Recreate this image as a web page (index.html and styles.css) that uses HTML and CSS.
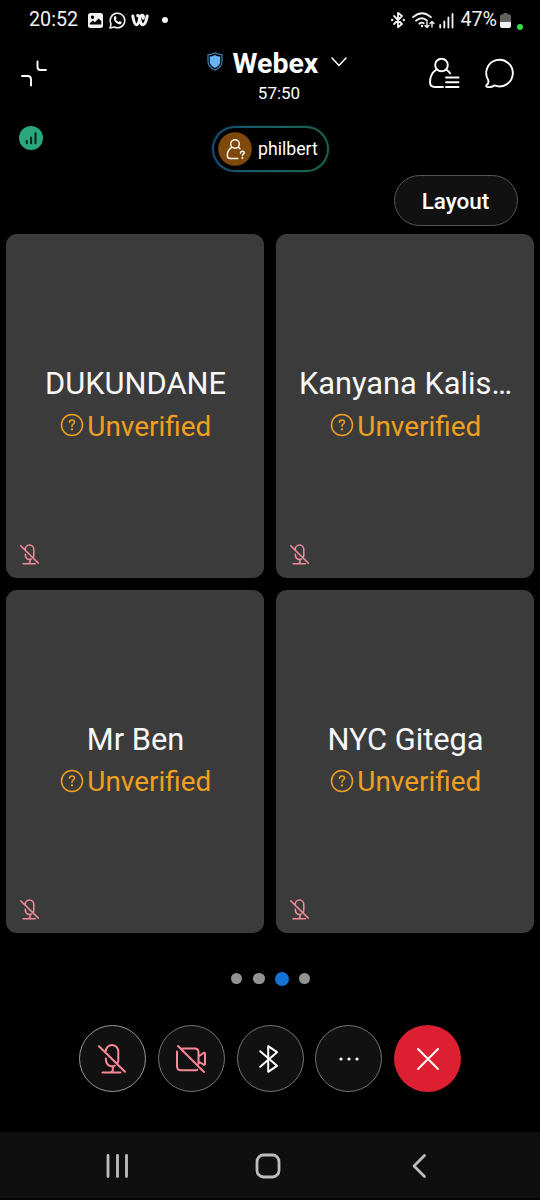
FILE: index.html
```html
<!DOCTYPE html>
<html lang="en">
<head>
<meta charset="utf-8">
<title>Webex meeting</title>
<link rel="stylesheet" href="styles.css">
</head>
<body>
<svg class="symbols" width="0" height="0" aria-hidden="true">
  <symbol id="mic-off" viewBox="0 0 28 30">
    <path d="M7.700 8V7.500a6.300 6.500 0 0 1 12.600 0v9q0 1.200-.6 2.200M7.900 14.500v1.700q.6 5.300 5.300 6.100 1.800.3 3.600-.6M14.800 22.700v2.500q0 3-2.800 3.300M4.500 28.500h18M1 2.200l26 25.500"/>
  </symbol>
  <symbol id="question" viewBox="0 0 24 24">
    <circle cx="12" cy="12" r="10.500"/>
    <path d="M9.500 9.300q.1-2.300 2.500-2.300t2.500 2.100q0 1.300-1.400 2.100-1.100.7-1.100 1.900v.5"/>
    <circle class="solid" cx="12" cy="16.400" r="1.100"/>
  </symbol>
</svg>
<div class="screen">
  <div class="status">
    <div class="status-left">
      <span>20:52</span>
      <svg class="i-photo" viewBox="0 0 15 15"><path fill="#f2f2f2" fill-rule="evenodd" d="M2.500 0h10A2.500 2.500 0 0 1 15 2.500v10a2.500 2.500 0 0 1-2.500 2.500h-10A2.500 2.500 0 0 1 0 12.500v-10A2.500 2.500 0 0 1 2.500 0zM4.500 2.500a1.700 1.700 0 1 0 .01 0zM1.700 11.500h11.600V8L10.500 5.500 7 9.300 4.800 7.600 1.700 10.300z"/></svg>
      <svg class="i-whatsapp" viewBox="0 0 17 17"><path class="line" d="M1 16l1.100-4A7.300 7.300 0 1 1 5.200 15z"/><path fill="#f2f2f2" d="M5.600 4.500c.8-.8 1.400-.2 1.600.6l.4 1.100-.8 1.100q1 1.900 2.900 2.700l1.100-1 1.800.9c.5.4 0 1.600-.8 2-1.600.8-3.500-.1-5-1.500C5 8.700 4 6 5.600 4.500z"/></svg>
      <svg class="i-webex" viewBox="0 0 18 14"><path fill="none" stroke="#f2f2f2" stroke-width="3" stroke-linecap="round" stroke-linejoin="round" d="M1.800 3c.7 4 1.500 8.800 3.800 8.800C8.600 11.800 8 2.200 11 2.200c1.500 0 1.700 1.500 1.300 3M6.600 2.500c1.700 0 2 2.500 2.400 4.500.5 3 1 4.800 2.900 4.800 2.700 0 3.600-5 4.300-8.800"/></svg>
      <i class="more-dot"></i>
    </div>
    <div class="status-right">
      <svg class="i-bt" viewBox="0 0 14 16"><path class="line bold" d="M3 4l8 8-4 3.200V.8L11 4l-8 8"/><circle cx="1.200" cy="8" r="1.200" fill="#f2f2f2"/><circle cx="12.800" cy="8" r="1.200" fill="#f2f2f2"/></svg>
      <svg class="i-wifi" viewBox="0 0 23 17"><path class="line bold" d="M1 5.200q9-8 18 0M4 8.700q6-5 11 0M7.200 11.700q2.500-2 4.500-.5"/><circle cx="10" cy="14" r="1.200" fill="#f2f2f2"/><path class="line thin" d="M15 10v5.500M13 13.500l2 2 2-2M20 15V9.500M18 11.500l2-2 2 2"/></svg>
      <svg class="i-signal" viewBox="0 0 15 15"><path class="line bold" d="M1.200 12v2.500M5.300 8.500v6M9.400 4.500v10M13.500 1v13.500"/></svg>
      <span>47%</span>
      <svg class="i-battery" viewBox="0 0 11 15"><path fill="#626262" d="M3.500 0h4v1.300H9q2 0 2 2V9H0V3.300q0-2 2-2h1.500z"/><path fill="#f2f2f2" d="M0 9h11v4q0 2-2 2H2q-2 0-2-2z"/></svg>
      <i class="camera-dot"></i>
    </div>
  </div>

  <header class="header">
    <svg class="i-collapse" viewBox="21 60 26 27"><path d="M37.500 61.500v5.500q0 3 3 3h5.500M22 76h5.500q3.500 0 3.500 3.500v6"/></svg>
    <div class="meeting">
      <div class="meeting-title">
        <svg class="i-shield" viewBox="0 0 16 19"><path fill="none" stroke="#438dcb" stroke-width="1.100" d="M8 .8q3.300 2 7 2v6.700q0 5.500-7 8.600-7-3.100-7-8.600V2.800q3.700 0 7-2z"/><path fill="#64b4fa" d="M8 3q2.500 1.500 5.200 1.500V9.500q0 4-5.200 6.500-5.200-2.500-5.200-6.500V4.500Q5.500 4.500 8 3z"/></svg>
        <h1>Webex</h1>
        <svg class="i-chevron" viewBox="0 0 16 10"><path d="M1 1l7 7.500L15 1"/></svg>
      </div>
      <div class="timer">57:50</div>
    </div>
    <div class="header-actions">
      <svg class="i-people" viewBox="428 57 32 33"><circle cx="441.500" cy="65" r="6.300"/><path d="M436.200 69.800C431.500 73 430 77 430 82q0 5 5 5h8M446.500 69.800q2.300 1.200 3.600 3.600M446 77.500h12.500M446 82.300h12.500M446 87h12.500"/></svg>
      <svg class="i-chat" viewBox="484 58 32 31"><path d="M488.300 80.200A13.300 13.300 0 1 1 494.500 85.400Q491 87.800 486.800 86.800C486 86.500 486 85.500 486.700 85Q489 83 488.300 80.200z"/></svg>
    </div>
  </header>

  <div class="speaker-row">
    <svg class="i-quality" viewBox="0 0 24 24"><circle cx="12" cy="12" r="12" fill="#2aa77d"/><path d="M7.800 15v2.300M12.100 11.500v5.800M16.500 7v10.300" fill="none" stroke="#062219" stroke-width="2" stroke-linecap="round"/></svg>
    <div class="speaker">
      <div class="speaker-inner">
        <svg class="i-avatar" viewBox="0 0 34 34"><circle cx="17" cy="17" r="16.800" fill="#80490c"/><g fill="none" stroke="#fff" stroke-width="1.400" stroke-linecap="round" stroke-linejoin="round"><circle cx="17" cy="12" r="4.300"/><path d="M13.700 15.200C10.700 17.500 9.300 20 9.300 23q0 3.500 3 3.500h7.500M20.300 15.200l1.700 1.500M22.500 21q0-1.800 1.900-1.800t1.900 1.500q0 1-1.100 1.500-.8.4-.8 1.300"/></g><circle cx="24.400" cy="26" r="1" fill="#fff"/></svg>
        <span>philbert</span>
      </div>
    </div>
  </div>

  <div class="layout-row"><button class="layout-button">Layout</button></div>

  <main class="grid">
    <section class="tile">
      <div class="name">DUKUNDANE</div>
      <div class="unverified"><svg><use href="#question"/></svg><span>Unverified</span></div>
      <svg class="tile-mic"><use href="#mic-off"/></svg>
    </section>
    <section class="tile">
      <div class="name">Kanyana Kalis…</div>
      <div class="unverified"><svg><use href="#question"/></svg><span>Unverified</span></div>
      <svg class="tile-mic"><use href="#mic-off"/></svg>
    </section>
    <section class="tile">
      <div class="name">Mr Ben</div>
      <div class="unverified"><svg><use href="#question"/></svg><span>Unverified</span></div>
      <svg class="tile-mic"><use href="#mic-off"/></svg>
    </section>
    <section class="tile">
      <div class="name">NYC Gitega</div>
      <div class="unverified"><svg><use href="#question"/></svg><span>Unverified</span></div>
      <svg class="tile-mic"><use href="#mic-off"/></svg>
    </section>
  </main>

  <div class="pager"><i></i><i></i><i class="active"></i><i></i></div>

  <div class="controls">
    <div class="control first"><svg class="c-mic"><use href="#mic-off"/></svg></div>
    <div class="control"><svg class="c-cam" viewBox="0 0 30 28"><path d="M6.500 3.500h12.300q3.700 0 3.700 3.700v11.500M1 6.500v14.800q0 4 4 4h14.500q1.500 0 1.700-.5M22.500 11.500l5-3.500q1.500-.8 1.500 1v9.500q0 1.800-1.500 1l-5-3M2 1l26 26"/></svg></div>
    <div class="control"><svg class="c-bt" viewBox="0 0 20 28"><path d="M1.200 6.200l16.800 14.600-8.800 6V1.200l8.800 6L1.200 21.800"/></svg></div>
    <div class="control"><svg class="c-more" viewBox="0 0 20 4"><circle cx="2" cy="2" r="1.600"/><circle cx="10" cy="2" r="1.600"/><circle cx="18" cy="2" r="1.600"/></svg></div>
    <div class="control leave"><svg class="c-leave" viewBox="0 0 22 22"><path d="M1 1l20 20M21 1L1 21"/></svg></div>
  </div>

  <nav class="navbar">
    <svg class="n-recents" viewBox="0 0 24 24"><path d="M2 1.500v21M11.500 1.500v21M20.500 1.500v21"/></svg>
    <svg class="n-home" viewBox="0 0 26 26"><rect x="2" y="2" width="22" height="22" rx="6.500"/></svg>
    <svg class="n-back" viewBox="0 0 16 24"><path d="M13.500 1.500L3 12l10.500 10.500"/></svg>
  </nav>
</div>
</body>
</html>
```
FILE: styles.css
```css
* { box-sizing: border-box; }
body {
  margin: 0;
  background: #000;
  color: #fff;
  font-family: Roboto, sans-serif;
}
svg { display: block; flex: none; overflow: visible; }
.symbols { position: absolute; }
.screen {
  display: flex;
  flex-direction: column;
  width: 540px;
  height: 1200px;
  overflow: hidden;
}

/* Status bar */
.status {
  display: flex;
  justify-content: space-between;
  height: 40px;
  padding: 0 17px 0 29px;
  font-size: 19.7px;
  line-height: 40px;
  color: #f2f2f2;
}
.status-left, .status-right { display: flex; align-items: center; }
.line { fill: none; stroke: #f2f2f2; stroke-width: 1.5; stroke-linecap: round; stroke-linejoin: round; }
.line.thin { stroke-width: 1.4; }
.line.bold { stroke-width: 1.8; }
.i-photo { width: 15px; height: 15px; margin-left: 9.500px; }
.i-whatsapp { width: 17px; height: 17px; margin-left: 6.500px; }
.i-webex { width: 18px; height: 14px; margin-left: 5px; }
.more-dot { width: 6px; height: 6px; margin-left: 13px; border-radius: 50%; background: #f2f2f2; }
.i-bt { width: 14px; height: 16px; }
.i-wifi { width: 23px; height: 17px; margin-left: 7px; }
.i-signal { width: 15px; height: 15px; margin: 0 6px 0 4px; }
.i-battery { width: 11px; height: 15px; margin-left: 3px; }
.camera-dot { width: 6px; height: 6px; margin: 13px 0 0 6px; border-radius: 50%; background: #32e04e; }

/* Header */
.header {
  display: flex;
  align-items: flex-start;
  height: 82px;
  padding: 0 24px 0 21px;
}
.i-collapse { width: 26px; height: 27px; margin-top: 20px; }
.i-collapse, .i-chevron, .i-people, .i-chat {
  fill: none; stroke: #fff; stroke-width: 1.9; stroke-linecap: round; stroke-linejoin: round;
}
.meeting { width: 140px; margin-left: 160px; }
.meeting-title { display: flex; align-items: flex-start; height: 42px; }
.i-shield { width: 16px; height: 19px; margin-top: 12px; }
h1 { margin: 8px 0 0 9.500px; width: 87px; font-size: 28.5px; line-height: 32px; font-weight: 700; white-space: nowrap; }
.i-chevron { width: 16px; height: 10px; margin: 17px 0 0 12.500px; stroke-width: 1.5; }
.timer { width: 144px; text-align: center; font-size: 17px; line-height: 22px; }
.header-actions { display: flex; gap: 24px; margin-left: auto; padding-top: 17px; }
.i-people { width: 32px; height: 33px; }
.i-chat { width: 32px; height: 31px; margin-top: 1px; }

/* Active speaker */
.speaker-row { display: flex; align-items: flex-start; height: 53px; padding: 4px 19px 0; }
.i-quality { width: 24px; height: 24px; }
.speaker {
  width: 116.500px;
  height: 46px;
  margin-left: 169px;
  padding: 2px;
  border-radius: 24px;
  background: linear-gradient(100deg, #164b75, #1c625f 55%, #1c6048);
  box-shadow: 0 0 3px #0b3436;
}
.speaker-inner {
  display: flex;
  align-items: center;
  gap: 6px;
  height: 100%;
  padding-left: 4px;
  border-radius: 22px;
  background: #000;
  font-size: 17.7px;
}
.i-avatar { width: 34px; height: 34px; }
.layout-row { display: flex; justify-content: flex-end; height: 59px; padding-right: 22.500px; }
.layout-button {
  width: 124px;
  height: 51px;
  padding: 0;
  border: 1.5px solid #555;
  border-radius: 26px;
  background: #111;
  color: #fff;
  font: 500 22.5px/48px Roboto, sans-serif;
}

/* Participants */
.grid {
  display: grid;
  grid-template-columns: 258px 258px;
  grid-template-rows: 343.5px 343.5px;
  gap: 12px;
  padding-left: 6px;
}
.tile {
  display: flex;
  flex-direction: column;
  border-radius: 11px;
  background: #3b3b3b;
  text-align: center;
}
.name { padding: 130px 0 0 1px; font-size: 30.8px; line-height: 40px; color: #f7f7f7; white-space: nowrap; }
.unverified {
  display: flex;
  align-items: center;
  justify-content: center;
  gap: 3.500px;
  height: 44px;
  padding-left: 1px;
  font-size: 27.9px;
  color: #f0a01e;
}
.unverified svg { width: 24px; height: 24px; margin-top: -2px; fill: none; stroke: #f0a01e; stroke-width: 1.5; stroke-linecap: round; }
.solid { fill: #f0a01e; stroke: none; }
.tile-mic {
  width: 19px;
  height: 21px;
  margin: auto 0 13px 14px;
  fill: none; stroke: #ef8b98; stroke-width: 2.3; stroke-linecap: round;
}

/* Pager */
.pager { display: flex; justify-content: center; align-items: center; gap: 11px; height: 91px; padding-left: 1px; }
.pager i { width: 11.5px; height: 11.5px; border-radius: 50%; background: #949292; }
.pager .active { width: 14px; height: 14px; margin: 0 -1.2px; background: #1472d4; }

/* Call controls */
.controls { display: flex; justify-content: center; gap: 11.75px; height: 107px; margin-top: 1px; }
.control {
  display: flex;
  align-items: center;
  justify-content: center;
  width: 67px;
  height: 67px;
  border: 1.5px solid #747474;
  border-radius: 50%;
  background: #111;
  fill: none;
  stroke: #fff;
  stroke-width: 2;
  stroke-linecap: round;
  stroke-linejoin: round;
}
.control.first { border-color: #989898; }
.control.leave { border: 0; background: #dc2032; }
.c-mic { width: 28px; height: 30px; margin-right: 1px; stroke: #fb8797; }
.c-cam { width: 30px; height: 28px; margin-right: 1px; stroke: #fb8797; }
.c-bt { width: 20px; height: 28px; margin-right: 2px; }
.c-more { width: 20px; height: 4px; fill: #fff; stroke: none; }
.c-leave { width: 22px; height: 22px; }

/* System navigation */
.navbar {
  display: flex;
  align-items: center;
  height: 68px;
  padding: 1px 0 0 106px;
  border-bottom: 2px solid #050505;
  background: #0f0f0f;
  fill: none;
  stroke: #bdbdbd;
  stroke-width: 2.8;
  stroke-linecap: round;
  stroke-linejoin: round;
}
.n-recents { width: 24px; height: 24px; }
.n-home { width: 26px; height: 26px; margin-left: 125px; }
.n-back { width: 16px; height: 24px; margin-left: 130px; }
```
